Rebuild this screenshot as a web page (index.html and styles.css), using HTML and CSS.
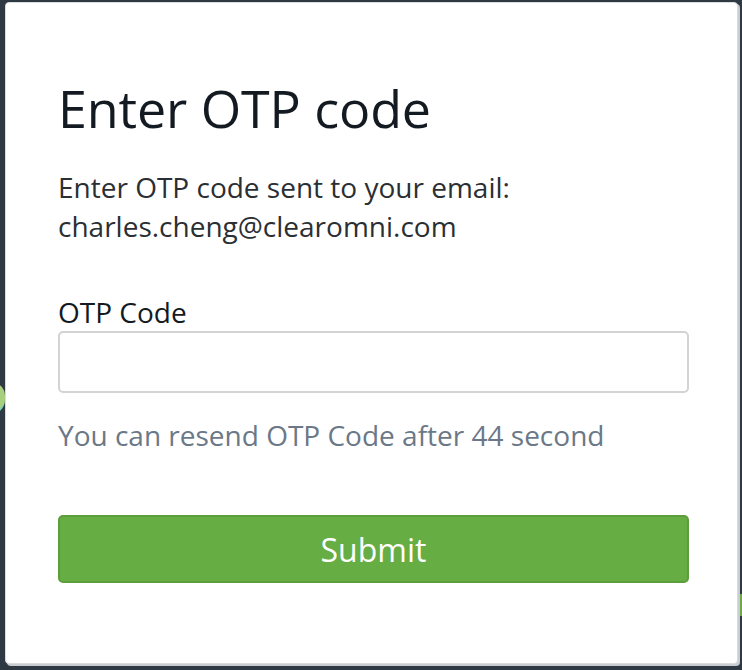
FILE: index.html
```html
<!DOCTYPE html>
<html lang="en">
<head>
  <meta charset="UTF-8" />
  <meta name="viewport" content="width=device-width, initial-scale=1.0"/>
  <title>Enter OTP code</title>
  <link rel="stylesheet" href="styles.css">
</head>
<body>
  <!-- bits of the page behind the dialog -->
  <div class="bg-shape left"></div>
  <div class="bg-shape right"></div>

  <div class="modal">
    <h2>Enter OTP code</h2>

    <p class="intro">
      Enter OTP code sent to your email:<br>
      charles.cheng@clearomni.com
    </p>

    <label for="otpCode">OTP Code</label>
    <input type="text" id="otpCode" />

    <p class="resend">You can resend OTP Code after <span id="countdown">44</span> second</p>

    <button class="submit-btn">Submit</button>
  </div>
</body>
</html>
```

FILE: styles.css
```css
* {
  box-sizing: border-box;
  margin: 0;
  padding: 0;
  font-family: 'Open Sans', sans-serif;
}

body {
  background: #2f3943;
  width: 742px;
  height: 670px;
  overflow: hidden;
  position: relative;
  padding: 2px 0 0 5px;
}

.bg-shape {
  position: absolute;
  background: #a7cf7e;
}

.bg-shape.left {
  left: -20px;
  top: 382px;
  width: 25px;
  height: 32px;
  border-radius: 0 14px 14px 0;
  border-bottom: 4px solid #7fcfb0;
}

.bg-shape.right {
  right: 0;
  top: 594px;
  width: 4px;
  height: 22px;
  background: #6aa84a;
}

.modal {
  position: relative;
  width: 733px;
  height: 662px;
  background: #fff;
  border: 1px solid #d9dcdf;
  border-radius: 4px;
  box-shadow: 2px 2px 0 #c9ccd0;
  padding: 74px 48px 0 52px;
  color: #141a21;
}

h2 {
  font-size: 52px;
  font-weight: 400;
  line-height: 62px;
  margin-bottom: 29px;
  letter-spacing: -0.1px;
}

.intro {
  font-size: 28px;
  line-height: 39px;
  color: #2b2f33;
  margin-bottom: 48px;
}

label {
  display: block;
  font-size: 28px;
  line-height: 37px;
  color: #141a21;
}

input {
  display: block;
  width: 100%;
  height: 62px;
  border: 2px solid #d3d3d3;
  border-radius: 5px;
  font-size: 26px;
  padding: 0 16px;
  outline: none;
}

.resend {
  font-size: 28px;
  line-height: 39px;
  color: #6b7887;
  margin-top: 23px;
  margin-bottom: 60px;
}

button.submit-btn {
  display: block;
  width: 100%;
  height: 68px;
  background: #66ad44;
  border: 2px solid #5c9e3b;
  border-radius: 5px;
  color: #fff;
  font-size: 32px;
  cursor: pointer;
}
```
